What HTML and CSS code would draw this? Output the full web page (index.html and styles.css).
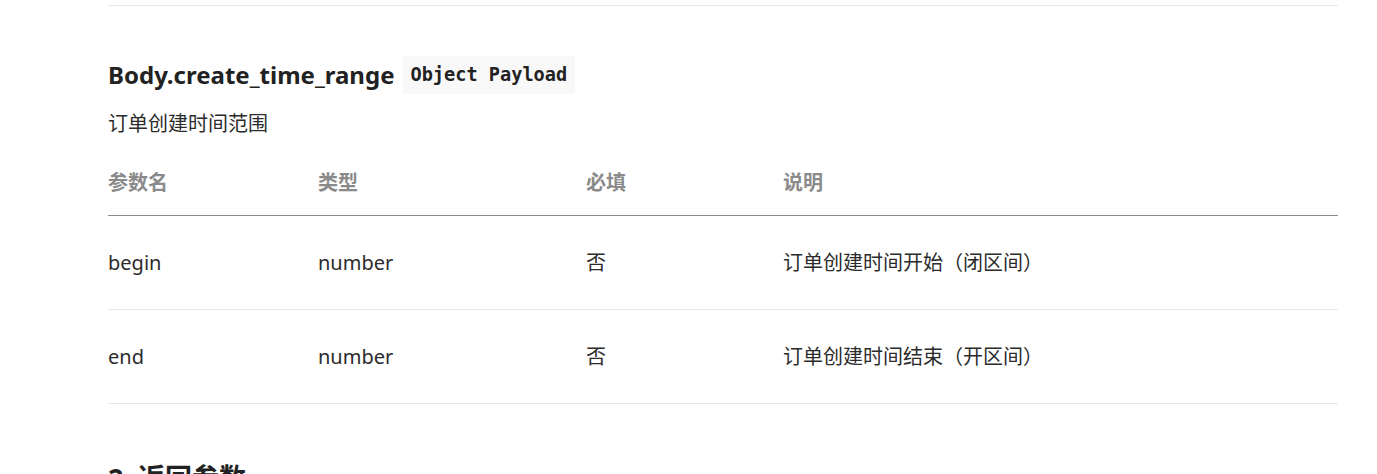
FILE: index.html
```html
<!DOCTYPE html>
<html lang="zh">
<head>
<meta charset="utf-8">
<link rel="stylesheet" href="styles.css">
</head>
<body>
<div class="doc">
  <hr class="rule">
  <h3 class="title">Body.create_time_range <code class="tag">Object Payload</code></h3>
  <p class="desc">订单创建时间范围</p>
  <table class="params">
    <thead>
      <tr><th class="c1">参数名</th><th class="c2">类型</th><th class="c3">必填</th><th>说明</th></tr>
    </thead>
    <tbody>
      <tr><td>begin</td><td>number</td><td>否</td><td>订单创建时间开始（闭区间）</td></tr>
      <tr><td>end</td><td>number</td><td>否</td><td>订单创建时间结束（开区间）</td></tr>
    </tbody>
  </table>
  <h2 class="section">2. 返回参数</h2>
</div>
</body>
</html>
```
FILE: styles.css
```css
html, body {
  margin: 0;
  padding: 0;
  background: #fff;
}
body {
  font-family: "Noto Sans", "Noto Sans CJK SC", sans-serif;
  color: #2b2b2b;
  overflow: hidden;
}
.doc {
  padding: 0 39px 0 108px;
}
.rule {
  margin: 5px 0 0;
  border: 0;
  border-top: 1px solid #e6e6e6;
  height: 0;
}
.title {
  margin: 50px 0 0;
  display: flex;
  align-items: center;
  font-size: 24px;
  line-height: 38px;
  font-weight: 700;
  color: #222;
}
.tag {
  margin-left: 8px;
  background: #f8f8f8;
  border-radius: 3px;
  padding: 0 8px;
  font-family: "DejaVu Sans Mono", monospace;
  font-size: 18.6px;
  font-weight: 700;
  line-height: 38px;
  color: #222;
}
.desc {
  margin: 14px 0 0;
  font-size: 20px;
  line-height: 32px;
}
.params {
  width: 100%;
  border-collapse: collapse;
  margin-top: 15px;
  font-size: 20px;
}
.params th {
  text-align: left;
  font-weight: 700;
  color: #8a8a8a;
  padding: 12px 0 16px;
  line-height: 32px;
  border-bottom: 1px solid #8a8a8a;
}
.params th.c1 { width: 210px; }
.params th.c2 { width: 268px; }
.params th.c3 { width: 197px; }
.params td {
  padding: 31px 0 30px;
  line-height: 32px;
  border-bottom: 1px solid #e6e6e6;
}
.section {
  margin: 58px 0 0;
  font-size: 27px;
  line-height: 32px;
  font-weight: 700;
  color: #222;
}
```
